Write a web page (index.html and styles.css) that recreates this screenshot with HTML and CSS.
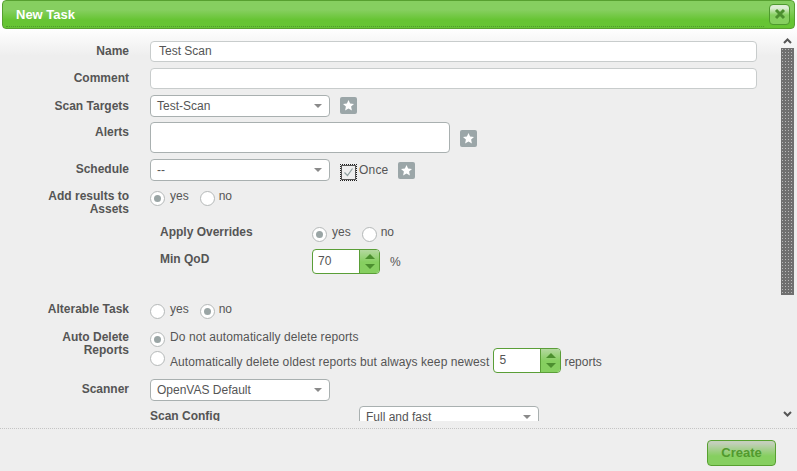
FILE: index.html
```html
<!DOCTYPE html>
<html lang="en">
<head>
    <meta charset="UTF-8">
    <title>New Task</title>
    <link rel="stylesheet" href="styles.css">
</head>
<body>
    <svg class="defs" width="0" height="0">
        <symbol id="star" viewBox="0 0 17 17">
            <rect width="17" height="17" rx="2" fill="#9ba6a8"/>
            <path d="M8.5 3l1.6 3.6 3.9.4-2.9 2.6.8 3.9-3.4-2-3.4 2 .8-3.9L3 7l3.9-.4z" fill="#fff"/>
        </symbol>
    </svg>
    <div class="dialog">
        <div class="titlebar">
            <span class="title">New Task</span>
            <span class="close">
                <svg width="12" height="12" viewBox="0 0 12 12"><path d="M2 2l8 8M10 2l-8 8" stroke="#4c8f2f" stroke-width="3"/></svg>
            </span>
        </div>
        <div class="content">
            <div class="form">
                <div class="row row-name">
                    <label class="label">Name</label>
                    <div class="input input-wide">Test Scan</div>
                </div>
                <div class="row row-name">
                    <label class="label">Comment</label>
                    <div class="input input-wide"></div>
                </div>
                <div class="row row-target">
                    <label class="label">Scan Targets</label>
                    <div class="select">Test-Scan</div>
                    <svg class="star"><use href="#star"/></svg>
                </div>
                <div class="row row-alerts">
                    <label class="label">Alerts</label>
                    <div class="multi"></div>
                    <svg class="star star-alerts"><use href="#star"/></svg>
                </div>
                <div class="row row-schedule">
                    <label class="label">Schedule</label>
                    <div class="select">--</div>
                    <span class="check">
                        <svg width="11" height="11" viewBox="0 0 11 11"><path d="M1.5 5.5l3 3 5-7" fill="none" stroke="#8fa0a0" stroke-width="1.2"/></svg>
                    </span>
                    <span class="once">Once</span>
                    <svg class="star star-once"><use href="#star"/></svg>
                </div>
                <div class="row row-assets">
                    <label class="label">Add results to Assets</label>
                    <div class="radios">
                        <span class="radio radio-on"></span><span class="opt">yes</span>
                        <span class="radio"></span><span class="opt opt-no">no</span>
                    </div>
                </div>
                <div class="nested">
                    <div class="nested-row row-overrides">
                        <label class="sub-label">Apply Overrides</label>
                        <div class="radios">
                            <span class="radio radio-on"></span><span class="opt">yes</span>
                            <span class="radio"></span><span class="opt opt-no">no</span>
                        </div>
                    </div>
                    <div class="nested-row row-qod">
                        <label class="sub-label">Min QoD</label>
                        <div class="spinner">
                            <span class="spin-value">70</span>
                            <span class="spin-btns"><i class="up"></i><i class="down"></i></span>
                        </div>
                        <span class="percent">%</span>
                    </div>
                </div>
                <div class="row row-alterable">
                    <label class="label">Alterable Task</label>
                    <div class="radios">
                        <span class="radio"></span><span class="opt">yes</span>
                        <span class="radio radio-on"></span><span class="opt opt-no">no</span>
                    </div>
                </div>
                <div class="row row-delete">
                    <label class="label">Auto Delete Reports</label>
                    <div class="delete-opts">
                        <div class="delete-a">
                            <span class="radio radio-on"></span><span class="opt opt-long">Do not automatically delete reports</span>
                        </div>
                        <div class="delete-b">
                            <span class="radio"></span>
                            <span class="opt opt-long opt-keep">Automatically delete oldest reports but always keep newest</span>
                            <div class="spinner spinner-keep">
                                <span class="spin-value">5</span>
                                <span class="spin-btns"><i class="up"></i><i class="down"></i></span>
                            </div>
                            <span class="opt opt-keep opt-reports">reports</span>
                        </div>
                    </div>
                </div>
                <div class="row row-scanner">
                    <label class="label">Scanner</label>
                    <div class="select">OpenVAS Default</div>
                </div>
                <div class="row-config">
                    <label class="config-label">Scan Config</label>
                    <div class="select select-config">Full and fast</div>
                </div>
            </div>
            <div class="scrollbar">
                <svg class="arrow" width="9" height="6" viewBox="0 0 9 6"><path d="M1 5l3.5-3.5L8 5" fill="none" stroke="#555" stroke-width="2"/></svg>
                <div class="thumb"></div>
                <div class="track"></div>
                <svg class="arrow" width="9" height="6" viewBox="0 0 9 6"><path d="M1 1l3.5 3.5L8 1" fill="none" stroke="#555" stroke-width="2"/></svg>
            </div>
        </div>
        <div class="footer">
            <button class="create">Create</button>
        </div>
    </div>
</body>
</html>
```

FILE: styles.css
```css
html, body {
    margin: 0;
    padding: 0;
    height: 100%;
    overflow: hidden;
}

body {
    background-color: #eeeeee;
    font-family: "Liberation Sans", Arial, sans-serif;
    font-size: 12px;
    color: #555555;
}

.defs {
    display: block;
    height: 0;
}

.dialog {
    display: flex;
    flex-direction: column;
    height: 471px;
    background: linear-gradient(#ffffff 28px, #eeeeee 56px);
}

.titlebar {
    position: relative;
    display: flex;
    align-items: center;
    justify-content: space-between;
    box-sizing: border-box;
    height: 29px;
    margin: 0 2px;
    padding: 0 4px 1px 13px;
    border: 1px solid #57a030;
    border-radius: 4px;
    background: linear-gradient(#86cf60 9px, #66c433 19px);
}

.titlebar::after {
    content: "";
    position: absolute;
    left: 3px;
    right: 30px;
    bottom: 1px;
    border-bottom: 1px dotted #4f9a2e;
}

.title {
    color: #ffffff;
    font-size: 13px;
    font-weight: bold;
}

.close {
    display: flex;
    align-items: center;
    justify-content: center;
    box-sizing: border-box;
    width: 21px;
    height: 21px;
    border: 1px solid #4f9a2e;
    border-radius: 4px;
    background: linear-gradient(#dfeed6 3px, #86cf60 10px);
}

.content {
    display: flex;
    height: 392px;
    overflow: hidden;
}

.form {
    box-sizing: border-box;
    width: 780px;
    height: 392px;
    padding-top: 12px;
    overflow: hidden;
}

.row {
    display: flex;
}

.label {
    flex: none;
    box-sizing: border-box;
    width: 129px;
    margin-right: 21px;
    padding-left: 29px;
    font-weight: bold;
    text-align: right;
    line-height: 13px;
}

.row-name {
    height: 27px;
}

.row-name .label {
    padding-top: 4px;
}

.row-target {
    height: 27px;
}

.row-target .label {
    padding-top: 5px;
}

.row-alerts {
    height: 37px;
}

.row-alerts .label {
    padding-top: 4px;
}

.row-schedule {
    height: 31px;
}

.row-schedule .label {
    padding-top: 4px;
}

.input, .select, .multi {
    box-sizing: border-box;
    background-color: #ffffff;
    border: 1px solid #c8cccc;
    border-radius: 4px;
}

.input {
    height: 21px;
    line-height: 19px;
    padding-left: 8px;
}

.input-wide {
    width: 607px;
}

.select {
    position: relative;
    width: 180px;
    height: 22px;
    line-height: 20px;
    padding-left: 6px;
    border-color: #a9b0b0;
}

.select::after {
    content: "";
    position: absolute;
    top: 8px;
    right: 7px;
    border-style: solid;
    border-width: 4px 4px 0;
    border-color: #8a8a8a transparent transparent;
}

.multi {
    width: 300px;
    height: 31px;
    border-color: #a9b0b0;
}

.star {
    flex: none;
    width: 17px;
    height: 17px;
    margin: 2px 0 0 10px;
}

.star-alerts {
    margin-top: 8px;
}

.star-once {
    margin: 3px 0 0 10px;
}

.check {
    display: flex;
    align-items: center;
    justify-content: center;
    box-sizing: border-box;
    width: 17px;
    height: 17px;
    margin: 5px 0 0 10px;
    border: 1px dotted #222222;
    background-color: #eeeeee;
    box-shadow: inset 0 0 0 1px #555555;
}

.once {
    margin: 4px 0 0 2px;
    letter-spacing: 0.2px;
}

.row-assets {
    height: 36px;
}

.radios {
    display: flex;
    align-items: flex-start;
}

.radio {
    flex: none;
    box-sizing: border-box;
    display: inline-block;
    position: relative;
    width: 15px;
    height: 15px;
    margin-top: 1px;
    background-color: #ffffff;
    border: 1px solid #b4b8b8;
    border-radius: 50%;
}

.radio-on::after {
    content: "";
    position: absolute;
    top: 3px;
    left: 3px;
    width: 7px;
    height: 7px;
    border-radius: 50%;
    background-color: #9aa5a5;
}

.opt {
    margin: -1px 11px 0 5px;
    line-height: 14px;
}

.opt-no {
    margin-left: 4px;
}

.nested {
    padding-left: 160px;
    height: 77px;
}

.nested-row {
    display: flex;
}

.sub-label {
    flex: none;
    width: 152px;
    font-weight: bold;
    line-height: 13px;
}

.row-overrides {
    height: 23px;
}

.row-qod .sub-label {
    padding-top: 4px;
}

.spinner {
    box-sizing: border-box;
    display: flex;
    width: 68px;
    height: 25px;
    border: 1px solid #5a9e37;
    border-radius: 4px;
    background-color: #ffffff;
    overflow: hidden;
}

.spin-value {
    flex: 1;
    line-height: 23px;
    padding-left: 5px;
}

.spin-btns {
    display: flex;
    flex-direction: column;
    align-items: center;
    justify-content: center;
    gap: 5px;
    width: 19px;
    border-left: 1px solid #5a9e37;
    background: linear-gradient(#b4d8a0, #86cf60 12px);
}

.up, .down {
    border-style: solid;
    border-color: transparent;
    border-width: 0 5px;
}

.up {
    border-bottom: 5px solid #4c8f2f;
}

.down {
    border-top: 5px solid #4c8f2f;
}

.percent {
    margin: 6px 0 0 10px;
}

.row-alterable {
    height: 28px;
}

.row-delete {
    height: 48px;
}

.delete-a {
    display: flex;
    height: 19px;
}

.delete-b {
    display: flex;
    align-items: flex-start;
}

.opt-long {
    letter-spacing: 0.09px;
}

.delete-a .opt {
    margin-right: 0;
}

.opt-keep {
    margin: 5px 4px 0 5px;
}

.opt-reports {
    margin-left: 3px;
}

.spinner-keep {
    margin-top: -2px;
}

.row-scanner {
    height: 27px;
}

.row-scanner .label {
    padding-top: 4px;
}

.row-config {
    display: flex;
    padding-left: 150px;
}

.config-label {
    flex: none;
    width: 209px;
    font-weight: bold;
    line-height: 20px;
}

.select-config {
    width: 180px;
}

.scrollbar {
    display: flex;
    flex-direction: column;
    align-items: center;
    width: 14px;
    padding-top: 9px;
    box-sizing: border-box;
}

.thumb {
    flex: none;
    width: 13px;
    height: 247px;
    margin-top: 4px;
    background-color: #6f6f6f;
    background-image: radial-gradient(#b8b8b8 1px, transparent 1px);
    background-size: 3px 3px;
}

.track {
    flex: none;
    height: 116px;
}

.footer {
    display: flex;
    justify-content: flex-end;
    align-items: flex-start;
    flex: 1;
    margin-top: 7px;
    padding: 11px 21px 0 0;
    border-top: 1px dotted #c4c4c4;
}

.create {
    box-sizing: border-box;
    width: 69px;
    height: 26px;
    padding: 0 0 2px;
    font-family: inherit;
    font-size: 13px;
    font-weight: bold;
    color: #519a2e;
    border: 1px solid #57a030;
    border-radius: 4px;
    background: linear-gradient(#c4cfbc 2px, #86cf60 15px);
}
```
